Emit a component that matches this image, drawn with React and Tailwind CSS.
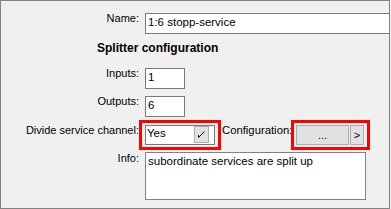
export default function App() {
  return (
    <div className="w-[391px] h-[209px] bg-[#f0f0f0] font-['Liberation_Sans',Arial,sans-serif] text-[11px] leading-[13px] text-black">
      <div className="w-[390px] h-[209px] border border-[#828282] overflow-hidden flex flex-col">
        {/* Name */}
        <div className="flex mt-[12px]">
          <div className="w-[138px] shrink-0 text-right -mt-[1px]">Name:</div>
          <div className="ml-[6px] w-[245px] shrink-0 h-[21px] border border-[#7a7a7a] bg-white pl-[2px] pt-[2px] text-[11.5px]">
            1:6 stopp-service
          </div>
        </div>

        {/* Section title */}
        <div className="mt-[7px] ml-[96px] text-[12px] leading-[14px] font-bold">Splitter configuration</div>

        {/* Inputs */}
        <div className="flex mt-[13px]">
          <div className="w-[138px] shrink-0 text-right -mt-[1px]">Inputs:</div>
          <div className="ml-[6px] w-[40px] h-[21px] border border-[#7a7a7a] bg-white pl-[2px] pt-[2px] text-[11.5px]">1</div>
        </div>

        {/* Outputs */}
        <div className="flex mt-[7px]">
          <div className="w-[138px] shrink-0 text-right -mt-[1px]">Outputs:</div>
          <div className="ml-[6px] w-[40px] h-[21px] border border-[#7a7a7a] bg-white pl-[2px] pt-[2px] text-[11.5px]">6</div>
        </div>

        {/* Divide service channel + Configuration */}
        <div className="flex mt-[3px]">
          <div className="w-[138px] shrink-0 text-right mt-[4px]">Divide service channel:</div>
          <div className="flex border-[3px] border-[#ff0000] px-[3px] py-[2px]">
            <div className="w-[70px] h-[20px] border border-[#7a7a7a] bg-white flex justify-between">
              <span className="pl-[1px] pt-[1px] text-[11.5px]">Yes</span>
              <div className="w-[15px] h-[17px] mr-[5px] border border-[#adadad] bg-[#e1e1e1] flex items-center justify-center">
                <svg width="9" height="9" viewBox="0 0 9 9" fill="none" stroke="#000" strokeWidth="1">
                  <path d="M1.5 5 L1.5 7.5 L7.5 1.5" />
                </svg>
              </div>
            </div>
          </div>
          <div className="ml-[1px] w-[69px] shrink-0 mt-[4px] whitespace-nowrap text-[11.3px]">Configuration:</div>
          <div className="flex gap-[1px] border-[3px] border-[#ff0000] pl-[2px] pr-[3px] py-[2px]">
            <div className="w-[53px] h-[20px] border border-[#adadad] bg-[#e1e1e1] flex items-center justify-center pt-[1px]">
              ...
            </div>
            <div className="w-[14px] h-[20px] border border-[#adadad] bg-[#e1e1e1] flex items-center justify-center">
              &gt;
            </div>
          </div>
        </div>

        {/* Info */}
        <div className="flex mt-[2px]">
          <div className="w-[138px] shrink-0 text-right">Info:</div>
          <div className="ml-[6px] w-[221px] h-[48px] border border-[#828282] bg-white pl-[2px] pt-[2px] text-[11.5px]">
            subordinate services are split up
          </div>
        </div>
      </div>
    </div>
  );
}
